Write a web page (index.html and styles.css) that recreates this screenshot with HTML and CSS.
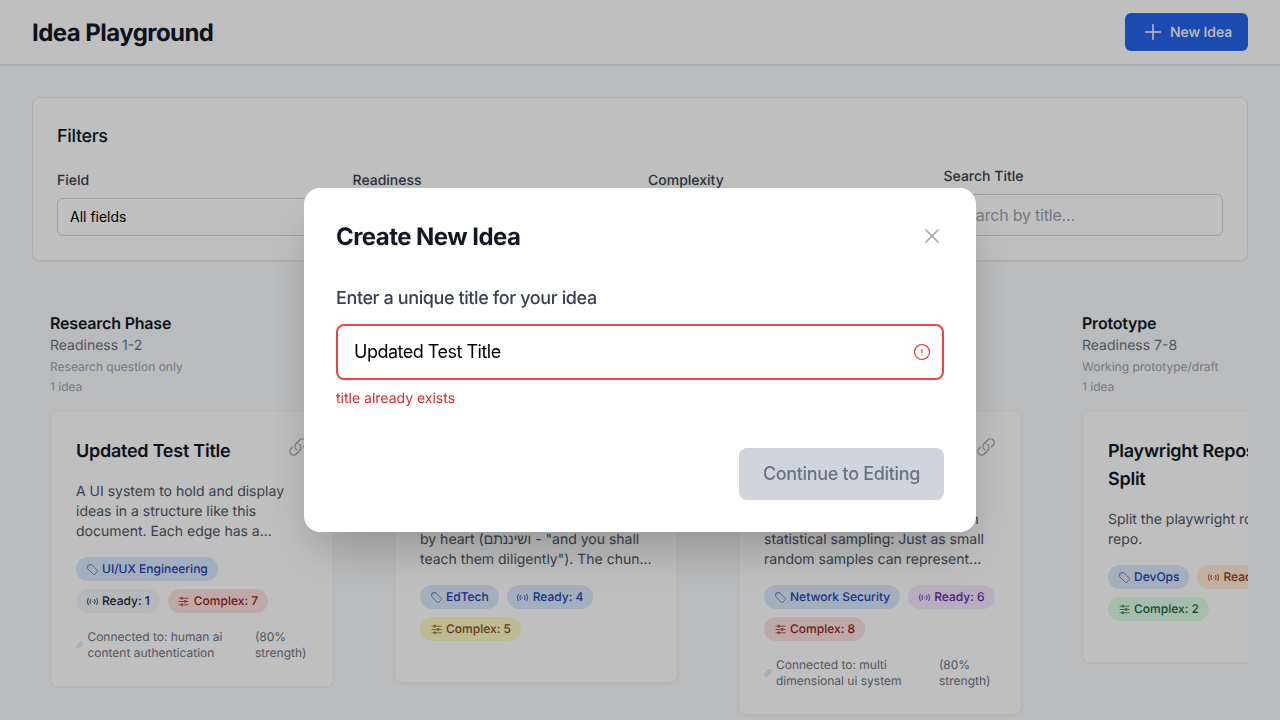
FILE: index.html
```html
<!DOCTYPE html>
<html lang="en">
  <head>
    <meta charset="UTF-8" />
    <meta name="viewport" content="width=device-width, initial-scale=1.0" />
    <title>Idea Playground</title>
    <link rel="stylesheet" href="styles.css">
  </head>

  <body>
    <!-- icon sprite -->
    <svg class="sprite" aria-hidden="true">
      <symbol id="i-plus" viewBox="0 0 24 24"><path d="M12 4.5v15m7.5-7.5h-15" /></symbol>
      <symbol id="i-close" viewBox="0 0 24 24"><path d="M6 18L18 6M6 6l12 12" /></symbol>
      <symbol id="i-alert" viewBox="0 0 24 24"><path d="M12 9v3.75m9-.75a9 9 0 11-18 0 9 9 0 0118 0zm-9 3.75h.008v.008H12v-.008z" /></symbol>
      <symbol id="i-link" viewBox="0 0 24 24"><path d="M13.19 8.688a4.5 4.5 0 011.242 7.244l-4.5 4.5a4.5 4.5 0 01-6.364-6.364l1.757-1.757m13.35-.622l1.757-1.757a4.5 4.5 0 00-6.364-6.364l-4.5 4.5a4.5 4.5 0 001.242 7.244" /></symbol>
      <symbol id="i-tag" viewBox="0 0 24 24"><path d="M9.568 3H5.25A2.25 2.25 0 003 5.25v4.318c0 .597.237 1.17.659 1.591l9.581 9.581c.699.699 1.78.872 2.607.33a18.095 18.095 0 005.223-5.223c.542-.827.369-1.908-.33-2.607L11.16 3.66A2.25 2.25 0 009.568 3z" /><path d="M6 6h.008v.008H6V6z" /></symbol>
      <symbol id="i-signal" viewBox="0 0 24 24"><path d="M4.5 6.5c-2.2 3.2-2.2 7.8 0 11M8.5 8.5c-1.4 2.2-1.4 4.8 0 7M19.5 6.5c2.2 3.2 2.2 7.8 0 11M15.5 8.5c1.4 2.2 1.4 4.8 0 7M12 12h.01" /></symbol>
      <symbol id="i-sliders" viewBox="0 0 24 24"><path d="M10.5 6h9.75M10.5 6a1.5 1.5 0 11-3 0m3 0a1.5 1.5 0 10-3 0M3.75 6H7.5m3 12h9.75m-9.75 0a1.5 1.5 0 01-3 0m3 0a1.5 1.5 0 00-3 0m-3.75 0H7.5m9-6h3.75m-3.75 0a1.5 1.5 0 01-3 0m3 0a1.5 1.5 0 00-3 0m-9.75 0h9.75" /></symbol>
    </svg>

    <header class="topbar">
      <h1 class="topbar-title">Idea Playground</h1>
      <button class="btn-new" type="button">
        <svg class="icon-new"><use href="#i-plus" /></svg>
        New Idea
      </button>
    </header>

    <main class="page">
      <section class="filters">
        <h2 class="filters-title">Filters</h2>
        <div class="filters-grid">
          <div>
            <label class="filter-label" for="fieldSelect">Field</label>
            <select class="filter-select" id="fieldSelect"><option>All fields</option></select>
          </div>
          <div>
            <label class="filter-label" for="readySelect">Readiness</label>
            <select class="filter-select" id="readySelect"><option>All levels</option></select>
          </div>
          <div>
            <label class="filter-label" for="complexSelect">Complexity</label>
            <select class="filter-select" id="complexSelect"><option>All levels</option></select>
          </div>
          <div>
            <label class="filter-label" for="searchInput">Search Title</label>
            <input class="filter-search" id="searchInput" type="text" placeholder="Search by title..." />
          </div>
        </div>
      </section>

      <section class="board">
        <div class="column">
          <h3 class="col-title">Research Phase</h3>
          <p class="col-range">Readiness 1-2</p>
          <p class="col-note">Research question only</p>
          <p class="col-count">1 idea</p>
          <article class="card">
            <div class="card-head">
              <h4 class="card-title">Updated Test Title</h4>
              <svg class="icon-link"><use href="#i-link" /></svg>
            </div>
            <p class="card-text">A UI system to hold and display ideas in a structure like this document. Each edge has a...</p>
            <div class="pills">
              <span class="pill pill-blue"><svg class="icon-pill"><use href="#i-tag" /></svg>UI/UX Engineering</span>
              <span class="pill pill-gray"><svg class="icon-pill icon-bold"><use href="#i-signal" /></svg>Ready: 1</span>
              <span class="pill pill-red"><svg class="icon-pill icon-bold"><use href="#i-sliders" /></svg>Complex: 7</span>
            </div>
            <div class="conn">
              <svg class="icon-conn"><use href="#i-link" /></svg>
              <span>Connected to: human ai content authentication</span>
              <span>(80% strength)</span>
            </div>
          </article>
        </div>

        <div class="column">
          <h3 class="col-title">Early Concept</h3>
          <p class="col-range">Readiness 3-4</p>
          <p class="col-note">Basic concept outlined</p>
          <p class="col-count">1 idea</p>
          <article class="card">
            <div class="card-head">
              <h4 class="card-title">Chunked Memorization Learning App</h4>
              <svg class="icon-link"><use href="#i-link" /></svg>
            </div>
            <p class="card-text">A tool for learning long passages by heart (ושיננתם - "and you shall teach them diligently"). The chun...</p>
            <div class="pills">
              <span class="pill pill-blue"><svg class="icon-pill"><use href="#i-tag" /></svg>EdTech</span>
              <span class="pill pill-blue"><svg class="icon-pill icon-bold"><use href="#i-signal" /></svg>Ready: 4</span>
              <span class="pill pill-yellow"><svg class="icon-pill icon-bold"><use href="#i-sliders" /></svg>Complex: 5</span>
            </div>
          </article>
        </div>

        <div class="column">
          <h3 class="col-title">Developed</h3>
          <p class="col-range">Readiness 5-6</p>
          <p class="col-note">Detailed plan written</p>
          <p class="col-count">1 idea</p>
          <article class="card">
            <div class="card-head">
              <h4 class="card-title">Sampled Network Traffic Inspection</h4>
              <svg class="icon-link"><use href="#i-link" /></svg>
            </div>
            <p class="card-text">Inspect network traffic based on statistical sampling: Just as small random samples can represent...</p>
            <div class="pills">
              <span class="pill pill-blue"><svg class="icon-pill"><use href="#i-tag" /></svg>Network Security</span>
              <span class="pill pill-purple"><svg class="icon-pill icon-bold"><use href="#i-signal" /></svg>Ready: 6</span>
              <span class="pill pill-red"><svg class="icon-pill icon-bold"><use href="#i-sliders" /></svg>Complex: 8</span>
            </div>
            <div class="conn">
              <svg class="icon-conn"><use href="#i-link" /></svg>
              <span>Connected to: multi dimensional ui system</span>
              <span>(80% strength)</span>
            </div>
          </article>
        </div>

        <div class="column">
          <h3 class="col-title">Prototype</h3>
          <p class="col-range">Readiness 7-8</p>
          <p class="col-note">Working prototype/draft</p>
          <p class="col-count">1 idea</p>
          <article class="card">
            <div class="card-head">
              <h4 class="card-title">Playwright Repository Split</h4>
              <svg class="icon-link"><use href="#i-link" /></svg>
            </div>
            <p class="card-text">Split the playwright root into a new repo.</p>
            <div class="pills">
              <span class="pill pill-blue"><svg class="icon-pill"><use href="#i-tag" /></svg>DevOps</span>
              <span class="pill pill-orange"><svg class="icon-pill icon-bold"><use href="#i-signal" /></svg>Ready: 7</span>
              <span class="pill pill-green"><svg class="icon-pill icon-bold"><use href="#i-sliders" /></svg>Complex: 2</span>
            </div>
          </article>
        </div>
      </section>
    </main>

    <!-- Create idea dialog -->
    <div class="overlay">
      <div class="modal">
        <div class="modal-head">
          <h2 class="modal-title">Create New Idea</h2>
          <svg class="icon-close"><use href="#i-close" /></svg>
        </div>
        <label class="modal-label" for="titleInput">Enter a unique title for your idea</label>
        <div class="modal-field">
          <input class="modal-input" id="titleInput" type="text" value="Updated Test Title" />
          <svg class="icon-alert"><use href="#i-alert" /></svg>
        </div>
        <p class="modal-error">title already exists</p>
        <div class="modal-foot">
          <button class="btn-continue" type="button" disabled>Continue to Editing</button>
        </div>
      </div>
    </div>
  </body>
</html>
```

FILE: styles.css
```css
* {
  box-sizing: border-box;
}

html,
body {
  height: 100%;
}

body {
  margin: 0;
  overflow: hidden;
  background-color: #f9fafb;
  color: #111827;
  font-family: Inter, "Noto Sans", sans-serif;
  text-rendering: geometricPrecision;
}

h1,
h2,
h3,
h4,
p {
  margin: 0;
}

svg use {
  fill: none;
  stroke: currentColor;
  stroke-width: 1.5;
  stroke-linecap: round;
  stroke-linejoin: round;
}

.sprite {
  display: none;
}

/* top bar */
.topbar {
  display: flex;
  align-items: center;
  justify-content: space-between;
  height: 65px;
  padding: 0 32px;
  background-color: #fff;
  border-bottom: 1px solid #e5e7eb;
  box-shadow: 0 1px 2px rgba(0, 0, 0, 0.05);
}

.topbar-title {
  padding-top: 2px;
  font-size: 24px;
  line-height: 34px;
  font-weight: 700;
  letter-spacing: -0.55px;
}

.btn-new {
  display: flex;
  align-items: center;
  gap: 5px;
  height: 38px;
  padding: 0 16px;
  border: none;
  border-radius: 6px;
  background-color: #2563eb;
  color: #fff;
  font-family: inherit;
  font-size: 14px;
  font-weight: 500;
  letter-spacing: -0.1px;
  text-rendering: inherit;
}

.icon-new {
  width: 24px;
  height: 24px;
}

/* filters */
.page {
  padding: 32px;
}

.filters {
  padding: 24px;
  background-color: #fff;
  border: 1px solid #e5e7eb;
  border-radius: 8px;
  box-shadow: 0 1px 2px rgba(0, 0, 0, 0.05);
}

.filters-title {
  margin-bottom: 15px;
  padding-top: 1px;
  font-size: 18px;
  line-height: 28px;
  font-weight: 500;
  letter-spacing: -0.35px;
}

.filters-grid {
  display: grid;
  grid-template-columns: repeat(4, 1fr);
  gap: 16px;
  align-items: end;
}

.filter-label {
  display: block;
  margin-bottom: 7px;
  padding-top: 1px;
  color: #374151;
  font-size: 14px;
  line-height: 20px;
  font-weight: 500;
}

.filter-select {
  display: block;
  width: 100%;
  height: 38px;
  padding: 0 8px 2px;
  border: 1px solid #d1d5db;
  border-radius: 6px;
  background-color: #fff;
  color: #000;
  font-family: inherit;
  font-size: 14px;
}

.filter-search {
  display: block;
  width: 100%;
  height: 42px;
  padding: 0 12px;
  border: 1px solid #d1d5db;
  border-radius: 6px;
  font-family: inherit;
  font-size: 16px;
  letter-spacing: -0.2px;
}

.filter-search::placeholder {
  color: #9ca3af;
}

/* board */
.board {
  display: flex;
  gap: 24px;
  margin-top: 32px;
  overflow: hidden;
}

.column {
  flex: 0 0 320px;
  padding: 18px;
}

.col-title {
  font-size: 16px;
  line-height: 24px;
  font-weight: 600;
  letter-spacing: -0.2px;
}

.col-range {
  padding-top: 1px;
  color: #6b7280;
  font-size: 14px;
  line-height: 20px;
}

.col-note,
.col-count {
  margin-top: 4px;
  color: #9ca3af;
  font-size: 12px;
  line-height: 16px;
}

.col-note {
  margin-top: 3px;
}

.card {
  margin-top: 16px;
  padding: 25px;
  background-color: #fff;
  border: 1px solid #f3f4f6;
  border-radius: 8px;
  box-shadow: 0 1px 2px rgba(0, 0, 0, 0.05);
}

.card-head {
  display: flex;
  align-items: flex-start;
  justify-content: space-between;
  gap: 8px;
  margin-bottom: 15px;
}

.card-title {
  padding-top: 1px;
  font-size: 18px;
  line-height: 28px;
  font-weight: 600;
  letter-spacing: -0.25px;
}

.icon-link {
  flex: 0 0 20px;
  width: 20px;
  height: 20px;
  color: #9ca3af;
}

.card-text {
  margin-bottom: 15px;
  padding-top: 1px;
  color: #4b5563;
  font-size: 14px;
  line-height: 20px;
}

.pills {
  display: flex;
  flex-wrap: wrap;
  gap: 8px;
  margin-bottom: 16px;
}

.pill {
  display: inline-flex;
  align-items: center;
  gap: 4px;
  height: 24px;
  padding: 0 10px 1px;
  border-radius: 12px;
  font-size: 12px;
  font-weight: 500;
  white-space: nowrap;
}

.icon-pill {
  width: 13px;
  height: 13px;
  margin: 1px -0.5px 0;
  opacity: 0.7;
}

.icon-bold use {
  stroke-width: 2.2;
}

.pill-blue {
  background-color: #dbeafe;
  color: #1e40af;
}

.pill-gray {
  background-color: #f3f4f6;
  color: #1f2937;
}

.pill-red {
  background-color: #fee2e2;
  color: #991b1b;
}

.pill-yellow {
  background-color: #fef9c3;
  color: #854d0e;
}

.pill-purple {
  background-color: #f3e8ff;
  color: #6b21a8;
}

.pill-orange {
  background-color: #ffedd5;
  color: #9a3412;
}

.pill-green {
  background-color: #dcfce7;
  color: #166534;
}

.conn {
  display: flex;
  align-items: center;
  gap: 4px;
  color: #6b7280;
  font-size: 12px;
  line-height: 16px;
}

.icon-conn {
  width: 12px;
  height: 12px;
  color: #9ca3af;
}

/* dialog */
.overlay {
  position: fixed;
  inset: 0;
  display: flex;
  align-items: center;
  justify-content: center;
  background-color: rgba(0, 0, 0, 0.25);
}

.modal {
  width: 672px;
  padding: 32px;
  background-color: #fff;
  border-radius: 16px;
  box-shadow: 0 25px 50px -12px rgba(0, 0, 0, 0.25);
}

.modal-head {
  display: flex;
  align-items: center;
  justify-content: space-between;
  margin-bottom: 34px;
}

.modal-title {
  font-size: 24px;
  line-height: 34px;
  height: 32px;
  font-weight: 700;
  letter-spacing: -0.55px;
}

.icon-close {
  width: 24px;
  height: 24px;
  color: #9ca3af;
}

.modal-label {
  display: block;
  margin-bottom: 13px;
  padding-top: 1px;
  color: #374151;
  font-size: 18px;
  line-height: 24px;
  font-weight: 500;
  letter-spacing: -0.4px;
}

.modal-field {
  position: relative;
}

.modal-input {
  display: block;
  width: 100%;
  height: 56px;
  padding: 0 44px 2px 16px;
  border: 2px solid #ef4444;
  border-radius: 8px;
  outline: none;
  color: #000;
  font-family: inherit;
  font-size: 18px;
  letter-spacing: -0.5px;
}

.icon-alert {
  position: absolute;
  top: 18px;
  right: 12px;
  width: 20px;
  height: 20px;
  color: #ef4444;
}

.modal-error {
  margin-top: 9px;
  color: #dc2626;
  font-size: 14px;
  line-height: 20px;
}

.modal-foot {
  display: flex;
  justify-content: flex-end;
  margin-top: 39px;
}

.btn-continue {
  height: 52px;
  padding: 0 24px 2px;
  border: none;
  border-radius: 8px;
  background-color: #d1d5db;
  color: #6b7280;
  font-family: inherit;
  font-size: 18px;
  font-weight: 500;
  letter-spacing: -0.33px;
}
```
